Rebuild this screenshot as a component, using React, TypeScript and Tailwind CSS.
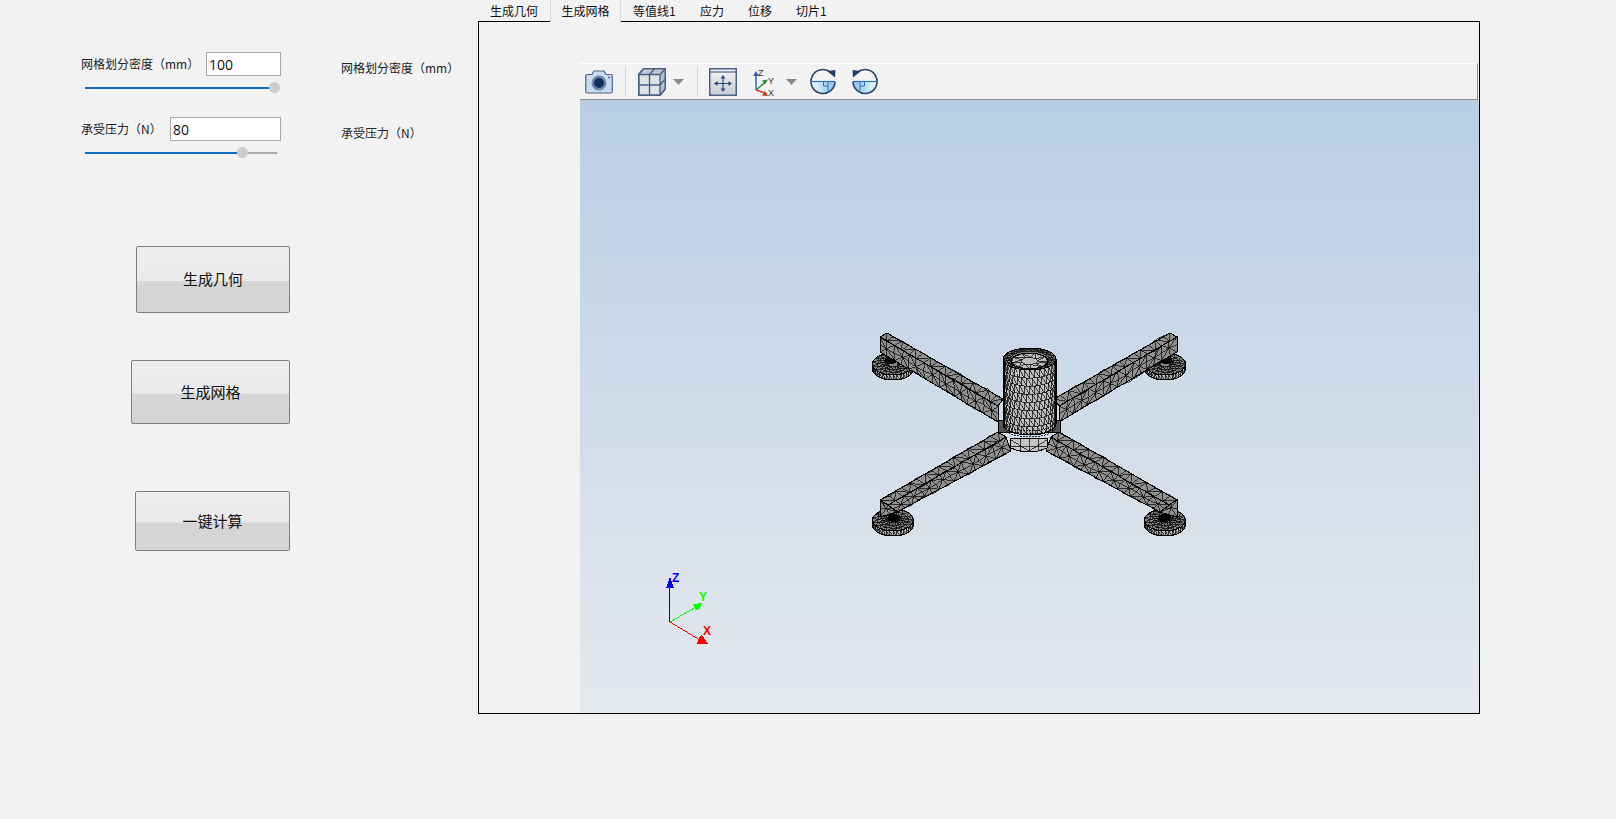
import React from "react";

const CJK = '"Noto Sans CJK SC","Liberation Sans",sans-serif';

function rng(seed: number) {
  let s = seed;
  return () => {
    s = (s * 16807) % 2147483647;
    return s / 2147483647;
  };
}
type P = [number, number];
const lerp = (a: P, b: P, t: number): P => [a[0] + (b[0] - a[0]) * t, a[1] + (b[1] - a[1]) * t];

function quadMesh(a: P, b: P, c: P, d: P, nu: number, nv: number, seed: number) {
  const r = rng(seed);
  const grid: P[][] = [];
  for (let i = 0; i <= nu; i++) {
    const row: P[] = [];
    for (let j = 0; j <= nv; j++) {
      let p = lerp(lerp(a, b, i / nu), lerp(d, c, i / nu), j / nv);
      if (i > 0 && i < nu) p = [p[0] + (r() - 0.5) * 2.6, p[1] + (r() - 0.5) * 1.6];
      row.push(p);
    }
    grid.push(row);
  }
  let out = "";
  const seg = (p: P, q: P) => {
    out += `M${p[0].toFixed(1)} ${p[1].toFixed(1)}L${q[0].toFixed(1)} ${q[1].toFixed(1)}`;
  };
  for (let i = 0; i <= nu; i++)
    for (let j = 0; j <= nv; j++) {
      if (i < nu) seg(grid[i][j], grid[i + 1][j]);
      if (j < nv) seg(grid[i][j], grid[i][j + 1]);
      if (i < nu && j < nv) {
        if ((i + j) % 2 === 0) seg(grid[i][j], grid[i + 1][j + 1]);
        else seg(grid[i + 1][j], grid[i][j + 1]);
      }
    }
  return out;
}

function Face({ pts, nu, nv, seed, fill = "#8f8f8f" }: { pts: [P, P, P, P]; nu: number; nv: number; seed: number; fill?: string }) {
  return (
    <g>
      <polygon points={pts.map((p) => p.join(",")).join(" ")} fill={fill} stroke="#000" strokeWidth={1} />
      <path d={quadMesh(pts[0], pts[1], pts[2], pts[3], nu, nv, seed)} stroke="#000" strokeWidth={0.7} fill="none" />
    </g>
  );
}

function diskMesh(cx: number, cy: number, rx: number, ry: number, rings: number[], spokes: number) {
  let out = "";
  const pt = (r: number, t: number): P => [cx + Math.cos(t) * rx * r, cy + Math.sin(t) * ry * r];
  rings.forEach((r, ri) => {
    for (let k = 0; k < spokes; k++) {
      const t0 = (k / spokes) * Math.PI * 2 + ri * 0.12;
      const t1 = ((k + 1) / spokes) * Math.PI * 2 + ri * 0.12;
      const a = pt(r, t0);
      const b = pt(r, t1);
      out += `M${a[0].toFixed(1)} ${a[1].toFixed(1)}L${b[0].toFixed(1)} ${b[1].toFixed(1)}`;
      if (ri > 0) {
        const c = pt(rings[ri - 1], t0 - 0.12);
        const d = pt(rings[ri - 1], t1 - 0.12);
        out += `M${a[0].toFixed(1)} ${a[1].toFixed(1)}L${c[0].toFixed(1)} ${c[1].toFixed(1)}`;
        out += `M${a[0].toFixed(1)} ${a[1].toFixed(1)}L${d[0].toFixed(1)} ${d[1].toFixed(1)}`;
      }
    }
  });
  return out;
}

function Foot({ cx, cy, dark }: { cx: number; cy: number; dark: P }) {
  const rx = 20.5;
  const ry = 11;
  const h = 5;
  let side = "";
  for (let k = 0; k <= 18; k++) {
    const t = (k / 18) * Math.PI;
    const x = cx + Math.cos(t) * rx;
    const y = cy + Math.sin(t) * ry;
    const x2 = cx + Math.cos(t + 0.17) * rx;
    const y2 = cy + Math.sin(t + 0.17) * ry;
    side += `M${x.toFixed(1)} ${y.toFixed(1)}L${x.toFixed(1)} ${(y + h).toFixed(1)}L${x2.toFixed(1)} ${y2.toFixed(1)}`;
  }
  return (
    <g>
      <path
        d={`M${cx - rx} ${cy}L${cx - rx} ${cy + h}A${rx} ${ry} 0 0 0 ${cx + rx} ${cy + h}L${cx + rx} ${cy}Z`}
        fill="#b4b4b4"
        stroke="#000"
      />
      <path d={side} stroke="#000" strokeWidth={0.7} fill="none" />
      <ellipse cx={cx} cy={cy} rx={rx} ry={ry} fill="#858585" stroke="#000" />
      <path d={diskMesh(cx, cy, rx, ry, [0.25, 0.5, 0.75, 1], 17)} stroke="#000" strokeWidth={0.7} fill="none" />
      <ellipse cx={dark[0]} cy={dark[1]} rx={6} ry={4} fill="#000" />
    </g>
  );
}

function Arm({ top, side, end, seed }: { top: [P, P, P, P]; side: [P, P, P, P]; end?: [P, P, P, P]; seed: number }) {
  return (
    <g>
      <Face pts={side} nu={16} nv={2} seed={seed + 1} />
      <Face pts={top} nu={16} nv={1} seed={seed} />
      {end && <Face pts={end} nu={2} nv={2} seed={seed + 2} />}
    </g>
  );
}

function cylinderMesh(cx: number, top: number, bottom: number, rx: number, ry: number) {
  let out = "";
  const nRows = 8;
  const nCols = 16;
  const dy = (bottom - top) / nRows;
  for (let i = 0; i <= nRows; i++) {
    const yy = top + dy * i;
    for (let k = 0; k < nCols; k++) {
      const t0 = (k / nCols) * Math.PI;
      const t1 = ((k + 1) / nCols) * Math.PI;
      const off = i % 2 ? 0.1 : 0;
      const x0 = cx + Math.cos(t0 + off) * rx;
      const x1 = cx + Math.cos(t1 + off) * rx;
      const y0 = yy + Math.sin(t0 + off) * ry;
      const y1 = yy + Math.sin(t1 + off) * ry;
      out += `M${x0.toFixed(1)} ${y0.toFixed(1)}L${x1.toFixed(1)} ${y1.toFixed(1)}`;
      if (i < nRows) {
        out += `M${x0.toFixed(1)} ${y0.toFixed(1)}L${x0.toFixed(1)} ${(y0 + dy).toFixed(1)}`;
        out += `M${x1.toFixed(1)} ${y1.toFixed(1)}L${x0.toFixed(1)} ${(y0 + dy).toFixed(1)}`;
      }
    }
  }
  return out;
}

function MeshModel() {
  const m = (p: P): P => [337 - p[0], p[1]];
  const mm = (q: [P, P, P, P]) => q.map(m) as [P, P, P, P];
  const tlTop: [P, P, P, P] = [[27, 13], [143, 79], [138, 86], [20, 17]];
  const tlSide: [P, P, P, P] = [[20, 17], [138, 86], [138, 102], [20, 32]];
  const blTop: [P, P, P, P] = [[138, 112], [20, 180], [28, 185], [146, 117]];
  const blSide: [P, P, P, P] = [[146, 117], [28, 185], [37, 192], [151, 131]];
  const blEnd: [P, P, P, P] = [[20, 180], [28, 185], [37, 192], [20, 197]];
  return (
    <svg width={340} height={230} viewBox="0 0 340 230" shapeRendering="crispEdges" className="absolute left-[280px] top-[298px]">
      <Foot cx={33} cy={44} dark={[31, 40]} />
      <Foot cx={305} cy={44} dark={[306, 40]} />
      <Arm top={tlTop} side={tlSide} seed={11} />
      <Arm top={mm(tlTop)} side={mm(tlSide)} seed={23} />
      <path d="M150 118 L188 118 L187 128 Q169 136 151 128 Z" fill="#c6c6c6" stroke="#000" />
      <path d="M151 120 L169 131 L187 120 M169 118 L169 132 M160 118 L160 130 M178 118 L178 130 M151 126 L187 126" stroke="#000" strokeWidth={0.7} fill="none" />
      <Foot cx={33} cy={200} dark={[34, 198]} />
      <Foot cx={305} cy={200} dark={[305, 198]} />
      <Arm top={blTop} side={blSide} end={blEnd} seed={41} />
      <Arm top={mm(blTop)} side={mm(blSide)} end={mm(blEnd)} seed={57} />
      <path d="M138 100 L200 100 L200 112 L138 112 Z" fill="#555" stroke="#000" />
      <path d="M143 39 L143 104 A26.5 11 0 0 0 196 104 L196 39 Z" fill="#bdbdbd" stroke="#000" />
      <path d={cylinderMesh(169.5, 39, 104, 26.5, 11)} stroke="#000" strokeWidth={0.7} fill="none" />
      <ellipse cx={169.5} cy={39} rx={26.5} ry={11} fill="#808080" stroke="#000" />
      <path d={diskMesh(169.5, 39, 26.5, 11, [0.72, 0.86, 1], 22)} stroke="#000" strokeWidth={0.7} fill="none" />
      <ellipse cx={169.5} cy={41} rx={18.5} ry={8} fill="#bdbdbd" stroke="#000" />
      <path d={diskMesh(169.5, 41, 18.5, 8, [0.45, 1], 9)} stroke="#000" strokeWidth={0.7} fill="none" />
      <path d="M143 100 A26.5 11 0 0 0 196 100 M143 103 A26.5 11 0 0 0 196 103 M143 106 A26.5 11 0 0 0 196 106" fill="none" stroke="#000" strokeWidth={0.8} strokeDasharray="2 1" />
      <path d="M144 38 L144 106 M195 38 L195 106" stroke="#000" strokeWidth={1} />
    </svg>
  );
}

function Axes() {
  return (
    <svg width={90} height={90} viewBox="0 0 90 90" shapeRendering="crispEdges" className="absolute left-[60px] top-[538px]">
      <path d="M29.5 62 L29.5 24" stroke="#0000ff" strokeWidth={1} />
      <path d="M30 17 L34 28 L26 28 Z" fill="#0000ff" />
      <path d="M30 62 L56 47" stroke="#00ff00" strokeWidth={1} />
      <path d="M62 43 L53 44 L56 50 L60 49 Z" fill="#00ff00" />
      <path d="M30 62 L60 80" stroke="#ff0000" strokeWidth={1} />
      <path d="M68 84 L57 84 L59 77 L62 75 Z" fill="#ff0000" />
      <text x={32} y={22} fontSize={12} fontWeight={700} fill="#0000ff" fontFamily="Liberation Sans">Z</text>
      <text x={59} y={41} fontSize={12} fontWeight={700} fill="#00ff00" fontFamily="Liberation Sans">Y</text>
      <text x={63} y={75} fontSize={12} fontWeight={700} fill="#ff0000" fontFamily="Liberation Sans">X</text>
    </svg>
  );
}

const Navy = "#4a6285";

function CameraIcon() {
  return (
    <svg width={28} height={24} viewBox="0 0 28 24">
      <path d="M.75 6 Q.75 4.5 2.5 4.5 L7 4.5 L9 1 L19 1 L21 4.5 L25.5 4.5 Q27.25 4.5 27.25 6 L27.25 21.5 Q27.25 23 25.5 23 L2.5 23 Q.75 23 .75 21.5 Z" fill="#c9dcef" stroke={Navy} strokeWidth={1.2} />
      <circle cx={14} cy={13} r={7.5} fill="#6d86ab" />
      <circle cx={14} cy={13} r={5} fill="#12305f" />
      <circle cx={24} cy={7.5} r={1} fill={Navy} />
    </svg>
  );
}
function BoxIcon() {
  return (
    <svg width={28} height={28} viewBox="0 0 28 28" fill="none">
      <path d="M.75 6.5 L5.5 .75 L27.25 .75 L27.25 21 L22 27.25 L.75 27.25 Z" fill="#dfe2e7" stroke={Navy} strokeWidth={1.5} />
      <path d="M.75 6.5 L5.5 .75 L27.25 .75 L22 6.5 Z" fill="#c3c9d3" />
      <path d="M22 6.5 L27.25 .75 L27.25 21 L22 27.25 Z" fill="#b9c0cc" />
      <path d="M.75 6.5 L5.5 .75 L27.25 .75 L27.25 21 L22 27.25 L.75 27.25 Z" stroke={Navy} strokeWidth={1.5} />
      <path d="M.75 6.5 L22 6.5 L27.25 .75 M22 6.5 L22 27.25 M.75 17 L22 17 L27.25 11 M11.5 6.5 L11.5 27.25 M11.5 6.5 L16.5 .75" stroke={Navy} strokeWidth={1.4} />
    </svg>
  );
}
function Caret() {
  return (
    <svg width={11} height={6} viewBox="0 0 11 6">
      <path d="M0 0 L11 0 L5.5 6 Z" fill="#8a8a8a" />
    </svg>
  );
}
function FitIcon() {
  return (
    <svg width={28} height={28} viewBox="0 0 28 28" fill="none">
      <defs>
        <linearGradient id="fitg" x1="0" y1="0" x2="0" y2="1">
          <stop offset="0" stopColor="#f3f3f5" />
          <stop offset="1" stopColor="#c9ced6" />
        </linearGradient>
      </defs>
      <rect x={0.75} y={0.75} width={26.5} height={26.5} fill="url(#fitg)" stroke={Navy} strokeWidth={1.5} />
      <path d="M1 4 L27 4" stroke={Navy} strokeWidth={1.2} />
      <path d="M14 9 L14 22 M7 15.5 L21 15.5" stroke="#2b4a78" strokeWidth={1.2} />
      <path d="M14 7 L11.5 10.5 L16.5 10.5 Z M14 24 L11.5 20.5 L16.5 20.5 Z M5 15.5 L8.5 13 L8.5 18 Z M23 15.5 L19.5 13 L19.5 18 Z" fill="#2b4a78" />
    </svg>
  );
}
function AxisIcon() {
  return (
    <svg width={24} height={28} viewBox="0 0 24 28" fill="none">
      <path d="M3 22 L3 7" stroke="#2f66b5" strokeWidth={1.5} />
      <path d="M3 3 L0 8 L6 8 Z" fill="#2f66b5" />
      <path d="M3 22 L12 14.5" stroke="#2e8b3d" strokeWidth={1.5} />
      <path d="M15 11.5 L9 12.5 L12 16.5 Z" fill="#2e8b3d" />
      <path d="M3 22 L12 25" stroke="#d9302a" strokeWidth={1.5} />
      <path d="M15 28 L9 27.5 L12 23 Z" fill="#d9302a" />
      <text x={5} y={8} fontSize={9} fill="#333" fontFamily="Liberation Sans">Z</text>
      <text x={15} y={15.5} fontSize={9} fill="#333" fontFamily="Liberation Sans">Y</text>
      <text x={15} y={27.5} fontSize={9} fill="#333" fontFamily="Liberation Sans">X</text>
    </svg>
  );
}
function RotateIcon({ flip }: { flip?: boolean }) {
  const gid = flip ? "rg2" : "rg1";
  return (
    <svg width={26} height={27} viewBox="0 0 26 27" fill="none" className={flip ? "-scale-x-100" : ""}>
      <defs>
        <linearGradient id={gid} x1="0" y1="0" x2="1" y2="0">
          <stop offset="0" stopColor="#eef7fd" />
          <stop offset="1" stopColor="#86c5ea" />
        </linearGradient>
      </defs>
      <path d="M1 13.5 L25 13.5 A12 12 0 0 1 1 13.5 Z" fill={`url(#${gid})`} />
      <path d="M20.7 4.3 A12 12 0 1 0 25 13.5" stroke="#2e4468" strokeWidth={1.6} />
      <path d="M1 13.5 L25 13.5" stroke="#2f6fb5" strokeWidth={1.2} />
      <path d="M13.5 13.5 L13.5 18 L18 18 M18 13.5 L18 25" stroke="#2f6fb5" strokeWidth={1} />
      <path d="M17 3 L25.5 2 L25 9.5 Z" fill="#1f3e6d" />
    </svg>
  );
}

function Toolbar() {
  return (
    <div className="flex h-[37px] w-[898px] items-center bg-[#f2f2f2] border-t border-t-white border-b border-b-[#8c8c8c] border-r border-r-[#8c8c8c] pl-[5px]">
      <div className="flex w-[28px]"><CameraIcon /></div>
      <div className="w-px h-[29px] bg-[#d4d4d4] ml-[12px]" />
      <div className="ml-[12px] flex"><BoxIcon /></div>
      <div className="ml-[7px] flex"><Caret /></div>
      <div className="w-px h-[29px] bg-[#d4d4d4] ml-[13px]" />
      <div className="ml-[11px] flex"><FitIcon /></div>
      <div className="ml-[16px] flex"><AxisIcon /></div>
      <div className="ml-[9px] flex"><Caret /></div>
      <div className="ml-[13px] flex"><RotateIcon /></div>
      <div className="ml-[16px] flex"><RotateIcon flip /></div>
    </div>
  );
}

function Field({ label, value, inputClass, pct, trackClass }: { label: string; value: string; inputClass: string; pct: number; trackClass: string }) {
  return (
    <div>
      <div className="flex items-center justify-between w-[200px] h-[24px]">
        <span className="text-[12px] text-[#222] whitespace-nowrap">{label}</span>
        <input readOnly value={value} className={`${inputClass} h-[24px] bg-white border border-[#ababab] px-[2px] text-[14px] text-[#111] outline-none`} style={{ fontFamily: '"Open Sans",sans-serif' }} />
      </div>
      <div className={`relative h-[2px] bg-[#ababab] ml-[4px] mt-[11px] ${trackClass}`}>
        <div className="h-full bg-[#0f6cbd]" style={{ width: `${pct}%` }} />
        <div className="absolute top-[-5px] w-[11px] h-[11px] -ml-[5px] rounded-full bg-[#cdcdcd]" style={{ left: `${pct}%` }} />
      </div>
    </div>
  );
}

function Btn({ label, className }: { label: string; className: string }) {
  return (
    <button className={`${className} self-end block rounded-[2px] border border-[#7f7f7f] text-[15px] text-[#111] bg-[linear-gradient(to_bottom,#ededed_0%,#eaeaea_52%,#d6d6d6_53%,#d4d4d4_100%)]`}>
      {label}
    </button>
  );
}

export default function App() {
  return (
    <div className="w-[1616px] h-[819px] bg-[#f2f2f2] flex overflow-hidden" style={{ fontFamily: CJK }}>
      <div className="w-[478px] shrink-0 flex flex-col pl-[81px] pr-[188px]">
        <div className="flex mt-[52px]">
          <Field label="网格划分密度（mm）" value="100" inputClass="w-[75px]" pct={97} trackClass="w-[195px]" />
          <div className="ml-[60px] text-[12px] text-[#222] mt-[7px] whitespace-nowrap">网格划分密度（mm）</div>
        </div>
        <div className="flex mt-[28px]">
          <Field label="承受压力（N）" value="80" inputClass="w-[111px]" pct={82} trackClass="w-[192px]" />
          <div className="ml-[60px] text-[12px] text-[#222] mt-[7px] whitespace-nowrap">承受压力（N）</div>
        </div>
        <div className="w-[209px] flex flex-col">
          <Btn label="生成几何" className="w-[154px] h-[67px] mt-[92px]" />
          <Btn label="生成网格" className="w-[159px] h-[64px] mt-[47px]" />
          <Btn label="一键计算" className="w-[155px] h-[60px] mt-[67px]" />
        </div>
      </div>
      <div className="flex-1 flex flex-col">
        <div className="h-[21px] flex text-[12px] text-[#111] leading-[21px] whitespace-nowrap">
          <div className="w-[72px] text-center">生成几何</div>
          <div className="w-[71px] text-center border-x border-[#d9d9d9] h-[22px] bg-[#f2f2f2] relative z-10">生成网格</div>
          <div className="ml-[12px] w-[42px]">等值线1</div>
          <div className="ml-[25px] w-[24px]">应力</div>
          <div className="ml-[24px] w-[24px]">位移</div>
          <div className="ml-[24px]">切片1</div>
        </div>
        <div className="w-[1002px] h-[693px] border border-black relative flex flex-col">
          <div className="ml-[101px] mt-[41px] flex-1 flex flex-col w-[899px]">
            <Toolbar />
            <div className="flex-1 bg-[linear-gradient(to_bottom,#b9cee4_0%,#e6e9ee_100%)]" />
          </div>
          <div className="absolute left-[101px] top-[0px] w-[899px] h-full pointer-events-none">
            <MeshModel />
            <Axes />
          </div>
        </div>
      </div>
    </div>
  );
}
